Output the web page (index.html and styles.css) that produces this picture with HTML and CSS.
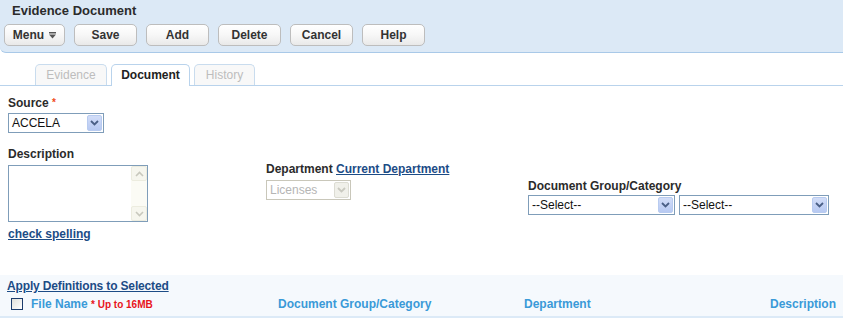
FILE: index.html
```html
<!DOCTYPE html>
<html lang="en">
<head>
    <meta charset="UTF-8">
    <title>Evidence Document</title>
    <link rel="stylesheet" href="styles.css">
</head>
<body>
    <div class="header">
        <div class="title">Evidence Document</div>
        <div class="toolbar">
            <button class="btn btn-menu">Menu
                <svg width="7" height="7" viewBox="0 0 7 7"><rect x="0" y="0" width="7" height="1.5" fill="#555"/><path d="M0 2.5 H7 L3.5 6.5 Z" fill="#555"/></svg>
            </button>
            <button class="btn">Save</button>
            <button class="btn">Add</button>
            <button class="btn">Delete</button>
            <button class="btn">Cancel</button>
            <button class="btn">Help</button>
        </div>
    </div>

    <div class="tabs">
        <div class="tab tab-evidence">Evidence</div>
        <div class="tab tab-active">Document</div>
        <div class="tab tab-history">History</div>
    </div>

    <div class="form">
        <div class="label">Source <span class="req">*</span></div>
        <div class="select select-source">
            <span class="select-text">ACCELA</span>
            <span class="arrow"><svg width="9" height="6" viewBox="0 0 9 6"><path d="M1 1 L4.5 4.5 L8 1" fill="none" stroke="#4a5f86" stroke-width="1.8"/></svg></span>
        </div>

        <div class="row">
            <div class="col col-desc">
                <div class="label">Description</div>
                <div class="textarea">
                    <div class="textarea-body"></div>
                    <div class="scrollbar">
                        <span class="sb-btn"><svg width="9" height="6" viewBox="0 0 9 6"><path d="M1 5 L4.5 1.5 L8 5" fill="none" stroke="#c8c8bd" stroke-width="1.6"/></svg></span>
                        <span class="sb-btn"><svg width="9" height="6" viewBox="0 0 9 6"><path d="M1 1 L4.5 4.5 L8 1" fill="none" stroke="#c8c8bd" stroke-width="1.6"/></svg></span>
                    </div>
                </div>
                <a class="link spell" href="#">check spelling</a>
            </div>
            <div class="col col-dept">
                <div class="label">Department <a class="link" href="#">Current Department</a></div>
                <div class="select select-disabled">
                    <span class="select-text">Licenses</span>
                    <span class="arrow"><svg width="9" height="6" viewBox="0 0 9 6"><path d="M1 1 L4.5 4.5 L8 1" fill="none" stroke="#c9c9c0" stroke-width="1.8"/></svg></span>
                </div>
            </div>
            <div class="col col-group">
                <div class="label">Document Group/Category</div>
                <div class="selects">
                    <div class="select select-group">
                        <span class="select-text">--Select--</span>
                        <span class="arrow"><svg width="9" height="6" viewBox="0 0 9 6"><path d="M1 1 L4.5 4.5 L8 1" fill="none" stroke="#4a5f86" stroke-width="1.8"/></svg></span>
                    </div>
                    <div class="select select-cat">
                        <span class="select-text">--Select--</span>
                        <span class="arrow"><svg width="9" height="6" viewBox="0 0 9 6"><path d="M1 1 L4.5 4.5 L8 1" fill="none" stroke="#4a5f86" stroke-width="1.8"/></svg></span>
                    </div>
                </div>
            </div>
        </div>
    </div>

    <div class="files">
        <a class="link apply" href="#">Apply Definitions to Selected</a>
        <div class="file-head">
            <span class="check"></span>
            <span class="th th-name">File Name <span class="limit">* Up to 16MB</span></span>
            <span class="th th-group">Document Group/Category</span>
            <span class="th th-dept">Department</span>
            <span class="th th-desc">Description</span>
        </div>
    </div>
</body>
</html>
```

FILE: styles.css
```css
* {
    margin: 0;
    padding: 0;
    box-sizing: border-box;
}

body {
    font-family: "Liberation Sans", Arial, sans-serif;
    font-size: 12px;
    color: #333;
    background: white;
    width: 843px;
    overflow: hidden;
}

.header {
    background: #dce9f6;
    border-bottom: 1px solid #a9c9e8;
    border-bottom-left-radius: 6px;
    height: 53px;
    padding-top: 3px;
}

.title {
    font-size: 13px;
    font-weight: bold;
    line-height: 16px;
    padding-left: 12px;
    color: #2b2b2b;
}

.toolbar {
    display: flex;
    gap: 9px;
    padding-left: 4px;
    margin-top: 5px;
}

.btn {
    width: 63px;
    height: 22px;
    font-family: inherit;
    font-size: 12px;
    font-weight: bold;
    color: #333;
    background: linear-gradient(#ffffff 0%, #f7f7f7 50%, #e9e9e9 100%);
    border: 1px solid #bdbdbd;
    border-radius: 5px;
    cursor: pointer;
}

.btn-menu {
    width: 61px;
    display: flex;
    align-items: center;
    justify-content: center;
    gap: 5px;
}

.tabs {
    display: flex;
    gap: 4px;
    padding-left: 35px;
    margin-top: 11px;
    border-bottom: 1px solid #b9d3ec;
    height: 22px;
}

.tab {
    height: 21px;
    border: 1px solid #c9dcee;
    border-bottom: none;
    border-radius: 5px 5px 0 0;
    text-align: center;
    line-height: 20px;
    color: #bdbdbd;
    background: #f8f8f8;
}

.tab-evidence { width: 72px; }
.tab-history { width: 61px; }

.tab-active {
    width: 79px;
    height: 22px;
    background: white;
    color: #222;
    font-weight: bold;
    border-color: #b9d3ec;
}

.form {
    padding-left: 8px;
    padding-top: 10px;
    height: 189px;
}

.label {
    font-weight: bold;
    line-height: 14px;
    color: #2b2b2b;
}

.req {
    color: #f04a1a;
    font-size: 10px;
    vertical-align: top;
}

.select {
    display: flex;
    align-items: stretch;
    height: 20px;
    border: 1px solid #7f9db9;
    background: white;
    margin-top: 3px;
}

.select-text {
    flex: 1;
    line-height: 18px;
    padding-left: 3px;
    color: #111;
    white-space: nowrap;
    overflow: hidden;
}

.arrow {
    width: 15px;
    margin: 1px;
    display: flex;
    align-items: center;
    justify-content: center;
    background: linear-gradient(#d2ddf8, #b7c9f2);
    border: 1px solid #b8cbf0;
    border-radius: 2px;
}

.select-source { width: 96px; }

.row {
    display: flex;
    align-items: flex-start;
}

.col-desc {
    width: 258px;
    padding-top: 14px;
}

.col-dept {
    width: 262px;
    padding-top: 29px;
}

.col-group {
    padding-top: 46px;
}

.textarea {
    display: flex;
    width: 140px;
    height: 57px;
    border: 1px solid #7f9db9;
    margin-top: 4px;
}

.textarea-body {
    flex: 1;
}

.scrollbar {
    width: 16px;
    background: #fbfbf5;
    display: flex;
    flex-direction: column;
    justify-content: space-between;
}

.sb-btn {
    height: 15px;
    display: flex;
    align-items: center;
    justify-content: center;
    border: 1px solid #ececdf;
    border-radius: 2px;
    background: #f6f6ee;
}

.link {
    color: #1c4c86;
    font-weight: bold;
    text-decoration: underline;
}

.spell {
    display: inline-block;
    margin-top: 5px;
}

.select-disabled {
    width: 85px;
    border-color: #c9c7ba;
    margin-top: 4px;
}

.select-disabled .select-text {
    color: #b5b5b5;
}

.select-disabled .arrow {
    background: #f0f0ea;
    border-color: #dcdcd3;
}

.selects {
    display: flex;
    gap: 4px;
    margin-top: 2px;
}

.select-group { width: 147px; margin-top: 0; }
.select-cat { width: 150px; margin-top: 0; }

.files {
    background: #f5f9fd;
    height: 43px;
    padding-top: 4px;
    padding-left: 7px;
    border-bottom: 2px solid #dceaf7;
}

.apply {
    display: block;
    line-height: 14px;
    width: max-content;
    letter-spacing: -0.15px;
}

.file-head {
    display: flex;
    align-items: center;
    height: 22px;
    padding-left: 4px;
}

.check {
    width: 12px;
    height: 12px;
    border: 1px solid #1c3c6c;
    background: linear-gradient(135deg, #e0e0da, #ffffff);
    margin-right: 8px;
}

.th {
    color: #3a9ad8;
    font-weight: bold;
}

.th-name { width: 247px; }

.limit {
    color: #e8141b;
    font-size: 10px;
}

.th-group { width: 246px; }

.th-dept { flex: 1; }

.th-desc { padding-right: 7px; }
```
